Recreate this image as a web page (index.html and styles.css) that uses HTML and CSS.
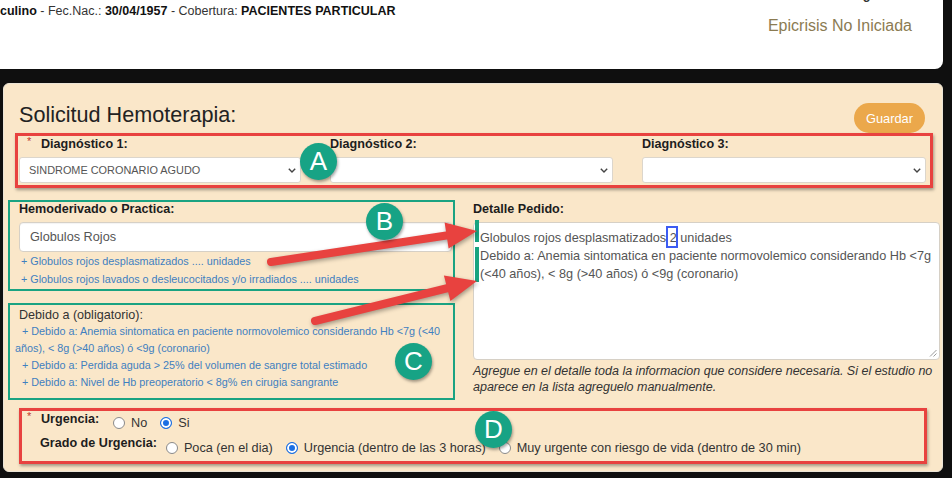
FILE: index.html
```html
<!DOCTYPE html>
<html lang="es">
<head>
<meta charset="utf-8">
<title>Solicitud Hemoterapia</title>
<link rel="stylesheet" href="styles.css">
</head>
<body>
<div class="screen">
  <header class="patient-bar">
    <div class="patient-info"><b>culino</b> - Fec.Nac.: <b>30/04/1957</b> - Cobertura: <b>PACIENTES PARTICULAR</b></div>
    <div class="status">
      <div class="status-top">No Ingresado</div>
      <div class="status-epi">Epicrisis No Iniciada</div>
    </div>
  </header>

  <section class="panel">
    <div class="panel-head">
      <h1 class="panel-title">Solicitud Hemoterapia:</h1>
      <button class="btn-save" type="button">Guardar</button>
    </div>

    <div class="diag-row">
      <div class="diag-col">
        <div class="field-label"><span class="req">*</span>Diagnóstico 1:</div>
        <div class="select-box"><span>SINDROME CORONARIO AGUDO</span><svg class="chev" width="8" height="5" viewBox="0 0 8 5"><path d="M0.8 0.8 L4 4 L7.2 0.8" fill="none" stroke="#444" stroke-width="1.4"/></svg></div>
      </div>
      <div class="diag-col">
        <div class="field-label">Diagnóstico 2:</div>
        <div class="select-box"><span></span><svg class="chev" width="8" height="5" viewBox="0 0 8 5"><path d="M0.8 0.8 L4 4 L7.2 0.8" fill="none" stroke="#444" stroke-width="1.4"/></svg></div>
      </div>
      <div class="diag-col">
        <div class="field-label">Diagnóstico 3:</div>
        <div class="select-box"><span></span><svg class="chev" width="8" height="5" viewBox="0 0 8 5"><path d="M0.8 0.8 L4 4 L7.2 0.8" fill="none" stroke="#444" stroke-width="1.4"/></svg></div>
      </div>
    </div>

    <div class="detail-row">
      <div class="left-col">
        <div class="field-label">Hemoderivado o Practica:</div>
        <div class="input-box">Globulos Rojos</div>
        <div class="hemo-links">
          <span class="link">+ Globulos rojos desplasmatizados .... unidades</span>
          <span class="link">+ Globulos rojos lavados o desleucocitados y/o irradiados .... unidades</span>
        </div>
        <div class="debido-label">Debido a (obligatorio):</div>
        <div class="debido-links">
          <span class="link">+ Debido a: Anemia sintomatica en paciente normovolemico considerando Hb &lt;7g (&lt;40 años), &lt; 8g (&gt;40 años) ó &lt;9g (coronario)</span>
          <span class="link">+ Debido a: Perdida aguda &gt; 25% del volumen de sangre total estimado</span>
          <span class="link">+ Debido a: Nivel de Hb preoperatorio &lt; 8g% en cirugia sangrante</span>
        </div>
      </div>
      <div class="right-col">
        <div class="field-label">Detalle Pedido:</div>
        <div class="textarea">
          <div>Globulos rojos desplasmatizados <span class="mark">2</span> unidades</div>
          <div>Debido a: Anemia sintomatica en paciente normovolemico considerando Hb &lt;7g (&lt;40 años), &lt; 8g (&gt;40 años) ó &lt;9g (coronario)</div>
          <svg class="grip" width="8" height="8" viewBox="0 0 8 8"><path d="M7.5 1 L1 7.5 M7.5 4.5 L4.5 7.5" stroke="#9a9a9a" stroke-width="1"/></svg>
        </div>
        <div class="help">Agregue en el detalle toda la informacion que considere necesaria. Si el estudio no aparece en la lista agreguelo manualmente.</div>
      </div>
    </div>

    <div class="urgency">
      <div class="urg-row">
        <span class="req">*</span>
        <span class="urg-label">Urgencia:</span>
        <div class="radio-group group-first">
          <label class="opt"><input class="radio" type="radio" name="urg">No</label>
          <label class="opt"><input class="radio" type="radio" name="urg" checked>Si</label>
        </div>
      </div>
      <div class="urg-row row-second">
        <span class="urg-label">Grado de Urgencia:</span>
        <div class="radio-group group-second">
          <label class="opt"><input class="radio" type="radio" name="grado">Poca (en el dia)</label>
          <label class="opt"><input class="radio" type="radio" name="grado" checked>Urgencia (dentro de las 3 horas)</label>
          <label class="opt"><input class="radio" type="radio" name="grado">Muy urgente con riesgo de vida (dentro de 30 min)</label>
        </div>
      </div>
    </div>
  </section>

  <div class="annotations">
    <div class="box box-red box-a"></div>
    <div class="box box-green box-b"></div>
    <div class="box box-green box-c"></div>
    <div class="box box-red box-d"></div>
    <div class="bar bar-1"></div>
    <div class="bar bar-2"></div>
    <svg class="arrows" width="952" height="478" viewBox="0 0 952 478">
      <line x1="271" y1="262" x2="448" y2="235.3" stroke="#e8423f" stroke-width="8" stroke-linecap="round"/>
      <polygon points="477,231 448.6,248.6 444.6,222.4" fill="#e8423f"/>
      <line x1="315" y1="321" x2="448" y2="288" stroke="#e8423f" stroke-width="8" stroke-linecap="round"/>
      <polygon points="477,281 450.4,301 443.9,275.4" fill="#e8423f"/>
    </svg>
    <div class="badge badge-a">A</div>
    <div class="badge badge-b">B</div>
    <div class="badge badge-c">C</div>
    <div class="badge badge-d">D</div>
  </div>
</div>
</body>
</html>
```

FILE: styles.css
```css
* { box-sizing: border-box; }
html, body { margin: 0; padding: 0; }
body {
  background: #0f0f0f;
  font-family: "Liberation Sans", Arial, sans-serif;
  color: #222;
  width: 952px;
  height: 478px;
  overflow: hidden;
}
.screen { position: relative; width: 952px; height: 478px; overflow: hidden; }

/* header */
.patient-bar {
  width: 943px;
  height: 69px;
  background: #fff;
  border-radius: 0 0 8px 0;
  display: flex;
  justify-content: space-between;
  align-items: flex-start;
  padding: 0 31px 0 0;
  overflow: hidden;
}
.patient-info { font-size: 12.5px; line-height: 16px; margin-top: 3px; color: #333; }
.patient-info b { color: #111; }
.status { display: flex; flex-direction: column; align-items: flex-end; }
.status-top { font-size: 12.7px; line-height: 16px; margin-top: -13px; font-weight: bold; color: #333; }
.status-epi { font-size: 16px; line-height: 20px; margin-top: 13px; color: #8b7b52; }

/* panel */
.panel {
  width: 940px;
  height: 389px;
  margin: 14px 0 0 3px;
  background: #fae7c9;
  border: 1px solid #ebe4d6;
  border-radius: 6px;
  padding: 19px 2px 0 15px;
}
.panel-head {
  display: flex;
  justify-content: space-between;
  align-items: flex-start;
  height: 30px;
  margin-right: 15px;
}
.panel-title { margin: 0; font-size: 21.6px; line-height: 24px; font-weight: normal; color: #222; }
.btn-save {
  height: 30px;
  padding: 0 12px;
  border: 0;
  border-radius: 15px;
  background: #eba84b;
  color: #fff;
  font-family: "Liberation Sans", Arial, sans-serif;
  font-size: 12.8px;
}

.diag-row {
  display: grid;
  grid-template-columns: 282px 283px 284px;
  column-gap: 29px;
  margin-top: 3px;
}
.field-label { display: flex; font-weight: bold; font-size: 12.6px; line-height: 16px; color: #1d1d1d; }
.req { width: 14px; margin-left: 8px; color: #c0392b; font-weight: normal; font-size: 11px; line-height: 11px; flex: none; }
.select-box {
  height: 26px;
  margin-top: 5px;
  background: #fff;
  border: 1px solid #dcd6cc;
  border-radius: 3px;
  display: flex;
  align-items: center;
  padding: 0 4px 0 9px;
  font-size: 10.9px;
  color: #555;
}
.chev { margin-left: auto; flex: none; }

/* detail row */
.detail-row { display: flex; margin-top: 18px; }
.left-col { width: 433px; }
.right-col { width: 467px; margin-left: 21px; }
.input-box {
  height: 30px;
  margin-top: 5px;
  background: #fff;
  border: 1px solid #d6d0c6;
  border-radius: 4px;
  padding: 0 10px;
  display: flex;
  align-items: center;
  font-size: 12.7px;
  color: #555;
  box-shadow: inset 0 1px 1px rgba(0,0,0,.05);
}
.hemo-links { padding-left: 2px; }
.link { display: block; font-size: 10.8px; line-height: 18px; color: #3f80c0; }
.debido-label { margin-top: 19px; font-size: 12.6px; line-height: 16px; color: #333; }
.debido-links { margin-left: -4px; width: 441px; }
.debido-links .link { line-height: 17px; text-indent: 7px; }

.textarea {
  position: relative;
  height: 138px;
  margin-top: 5px;
  background: #fff;
  border: 1px solid #d6d0c6;
  border-radius: 4px;
  padding: 6px 2px 6px 6px;
  font-size: 12.7px;
  line-height: 18px;
  color: #555;
}
.mark { position: relative; }
.mark::after {
  content: "";
  position: absolute;
  left: -4px;
  right: -1px;
  top: -5px;
  bottom: -3px;
  border: 2px solid #3d5cf2;
}
.grip { position: absolute; right: 2px; bottom: 2px; }
.help { margin-top: 3px; width: 470px; font-size: 12.5px; line-height: 16px; font-style: italic; color: #333; }

/* urgency */
.urgency { margin-top: 16px; }
.urg-row { display: flex; align-items: flex-start; }
.row-second { margin-top: 4px; padding-left: 21px; }
.urg-label { font-weight: bold; font-size: 12.6px; line-height: 16px; color: #1d1d1d; }
.radio-group { display: flex; align-items: center; gap: 13px; }
.group-first { margin: 4px 0 0 14px; }
.group-second { margin: 5px 0 0 9px; }
.opt { display: flex; align-items: center; font-size: 12.7px; line-height: 16px; color: #333; }
.radio {
  -webkit-appearance: none;
  appearance: none;
  width: 12px;
  height: 12px;
  margin: 0 6px 0 0;
  border: 1px solid #8a8a8a;
  border-radius: 50%;
  background: #fff;
  flex: none;
}
.radio:checked { border-color: #1b6fe3; background: #1b6fe3; box-shadow: inset 0 0 0 2px #fff; }

/* annotations */
.annotations { position: absolute; left: 0; top: 0; width: 952px; height: 478px; pointer-events: none; }
.box { position: absolute; }
.box-red { border: 3px solid #e8423f; box-shadow: 1px 2px 3px rgba(0,0,0,.35); }
.box-green { border: 2px solid #1aa382; }
.box-a { left: 15px; top: 133px; width: 918px; height: 55px; }
.box-b { left: 8px; top: 200px; width: 447px; height: 91px; }
.box-c { left: 8px; top: 303px; width: 447px; height: 97px; }
.box-d { left: 19px; top: 408px; width: 908px; height: 56px; }
.bar { position: absolute; left: 475px; width: 4px; background: #17a37f; }
.bar-1 { top: 220px; height: 22px; }
.bar-2 { top: 247px; height: 35px; }
.arrows { position: absolute; left: 0; top: 0; filter: drop-shadow(1px 2px 2px rgba(0,0,0,.35)); }
.badge {
  position: absolute;
  width: 37px;
  height: 37px;
  border-radius: 50%;
  background: #17a385;
  color: #fff;
  font-size: 26px;
  line-height: 37px;
  text-align: center;
  box-shadow: 1px 2px 3px rgba(0,0,0,.35);
}
.badge-a { left: 300px; top: 143px; }
.badge-b { left: 366px; top: 203px; }
.badge-c { left: 395px; top: 343px; }
.badge-d { left: 475px; top: 411px; }
```
